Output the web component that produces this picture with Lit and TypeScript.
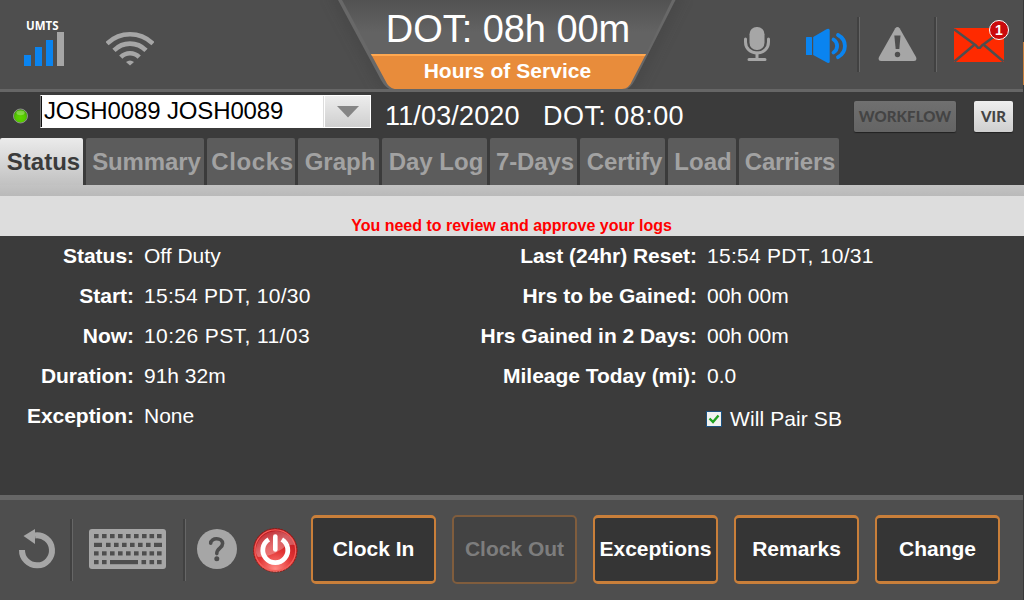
import { LitElement, html, css, svg } from "lit";
import { customElement } from "lit/decorators.js";

const TABS: [string, string][] = [
  ["Status", "t-status"],
  ["Summary", "t-summary"],
  ["Clocks", "t-clocks"],
  ["Graph", "t-graph"],
  ["Day Log", "t-daylog"],
  ["7-Days", "t-days"],
  ["Certify", "t-certify"],
  ["Load", "t-load"],
  ["Carriers", "t-carriers"],
];

const LEFT = [
  ["Status:", "Off Duty"],
  ["Start:", "15:54 PDT, 10/30", "wide"],
  ["Now:", "10:26 PST, 11/03", "wider"],
  ["Duration:", "91h 32m"],
  ["Exception:", "None"],
];

const RIGHT = [
  ["Last (24hr) Reset:", "15:54 PDT, 10/31", "wide"],
  ["Hrs to be Gained:", "00h 00m"],
  ["Hrs Gained in 2 Days:", "00h 00m"],
  ["Mileage Today (mi):", "0.0"],
];

const ACTIONS: [string, boolean][] = [
  ["Clock In", true],
  ["Clock Out", false],
  ["Exceptions", true],
  ["Remarks", true],
  ["Change", true],
];

const keyRow = (y: number, xs: number[]) =>
  xs.map((x) => svg`<rect x=${x} y=${y} width="4.6" height="4.2"/>`);

@customElement("app-root")
export class AppRoot extends LitElement {
  static styles = css`
    :host {
      display: grid;
      grid-template-columns: 1023px 1px;
      width: 1024px;
      height: 600px;
      overflow: hidden;
      background: #3b3b3b;
      color: #fff;
      font-family: "Liberation Sans", Arial, sans-serif;
      white-space: nowrap;
    }
    svg { display: block; flex: none; }
    .screen {
      display: grid;
      grid-template-rows: 92px 46px 47px 11px 40px 259px 105px;
      min-width: 0;
    }
    .edge { display: grid; grid-template-rows: 42px 43px 100px 11px 40px 1fr; background: #383838; }
    .edge-mark { grid-row: 2; background: #c97f3a; }
    .edge-band { grid-row: 4; }
    .edge-notice { grid-row: 5; background: #ddd; }

    .header {
      display: grid;
      grid-template-columns: 320px 373px 330px;
      background: #4e4e4e;
      border-bottom: 3px solid #666;
      box-sizing: border-box;
    }
    .signals { display: flex; padding-left: 23px; }
    .signal { width: 42px; padding-top: 19px; }
    .umts {
      font: 700 11.5px/13px "Open Sans", Lato, sans-serif;
      padding-left: 3px;
      height: 13px;
    }
    .wifi { padding: 31px 0 0 41px; }
    .title { position: relative; height: 92px; text-align: center; }
    .plate { position: absolute; left: 0; top: 0; }
    .clock { position: relative; font-size: 38px; line-height: 54px; height: 54px; padding: 2px 0 0 3px; box-sizing: border-box; letter-spacing: -0.05px; }
    .service { position: relative; font-size: 21px; font-weight: 700; line-height: 34px; letter-spacing: 0.05px; padding-left: 2px; }
    .tools { display: flex; align-items: flex-start; }
    .mic { margin: 26px 0 0 50px; }
    .speaker { margin: 28px 0 0 34px; }
    .rule { width: 1px; height: 55px; margin-top: 17px; border-left: 2px solid #414141; background: #666; flex: none; }
    .rule-a { margin-left: 9px; }
    .warn { margin: 26px 0 0 18px; }
    .rule-b { margin-left: 17px; }
    .mail { position: relative; margin: 28px 0 0 17px; width: 52px; height: 36px; }
    .badge {
      position: absolute; left: 35px; top: -8px; width: 18px; height: 18px;
      border: 1px solid #fff; border-radius: 50%; background: #cb0a0d;
      font: 700 14px/19px "Liberation Sans", sans-serif; text-align: center;
    }

    .subbar { display: flex; align-items: flex-start; }
    .dot { margin: 16px 0 0 12px; }
    .select { display: flex; width: 331px; height: 33px; margin: 3px 0 0 11px; background: #fff; box-sizing: border-box; border: 1px solid #fff; border-left: 1px solid #777; color: #000; }
    .user { width: 283px; font-size: 24px; line-height: 29px; padding-left: 2px; box-sizing: border-box; border-right: 1px solid #ddd; border-left: 1px solid #111; letter-spacing: -0.13px; }
    .drop { display: flex; flex: 1; margin-left: 1px; justify-content: center; align-items: center; background: linear-gradient(#ededed, #cfcfcf); }
    .date { font-size: 27px; line-height: 49px; margin-left: 14px; width: 159px; letter-spacing: 0.15px; }
    .dottime { font-size: 27px; line-height: 49px; width: 311px; letter-spacing: 0.45px; margin-left: -1px; }
    .btn {
      box-sizing: border-box; height: 31px; margin-top: 9px; border-radius: 2px; text-align: center;
      font: 900 15px/30px Lato, "Open Sans", sans-serif; color: #444; box-shadow: 0 1px 1px #222;
    }
    .workflow { width: 102px; background: linear-gradient(#707070, #646464); letter-spacing: 0.1px; }
    .vir { width: 39px; margin-left: 18px; background: linear-gradient(#eee, #cfcfcf); }

    .tabs { display: flex; gap: 3px; }
    .tab {
      flex: none; box-sizing: border-box; height: 47px; background: #5c5c5c; color: #a2a2a2;
      font-size: 24px; font-weight: 700; line-height: 48px; text-align: center; border-radius: 2px 2px 0 0;
      padding-left: 2px;
    }
    .t-status { width: 83px; background: linear-gradient(#ebebeb, #c1c1c1); color: #3b3b3b; padding-left: 4px; }
    .t-summary { width: 118px; letter-spacing: -0.1px; padding-left: 3px; }
    .t-clocks { width: 88px; letter-spacing: 0.6px; padding-left: 3px; }
    .t-graph { width: 81px; padding-left: 3px; }
    .t-daylog { width: 105px; padding-left: 3px; }
    .t-days { width: 87px; padding-left: 3px; letter-spacing: -0.1px; }
    .t-certify { width: 85px; padding-left: 4px; letter-spacing: -0.1px; }
    .t-load { width: 68px; }
    .t-carriers { width: 100px; letter-spacing: -0.2px; }
    .band { background: linear-gradient(#c3c3c3, #b9b9b9); }
    .notice { background: #ddd; color: #f00; font-size: 16px; font-weight: 700; text-align: center; line-height: 59px; overflow: hidden; }

    .content { display: grid; grid-template-columns: 460px 563px; font-size: 21px; align-items: start; }
    .facts { display: grid; grid-auto-rows: 40px; column-gap: 10px; line-height: 40px; }
    .facts-l { grid-template-columns: 134px 1fr; }
    .facts-r { grid-template-columns: 237px 1fr; }
    .label { font-weight: 700; text-align: right; letter-spacing: -0.03px; }
    .value { letter-spacing: 0; }
    .wide { letter-spacing: 0.28px; }
    .wider { letter-spacing: 0.4px; }
    .pair { grid-column: 2; display: flex; align-items: center; gap: 8px; padding: 6px 0 0; margin-left: -1px; letter-spacing: 0.1px; }

    .footer { display: flex; align-items: flex-start; background: #4e4e4e; border-top: 5px solid #666; box-sizing: border-box; }
    .undo { margin: 28px 0 0 18px; }
    .frule { width: 1px; height: 62px; margin-top: 19px; border-left: 2px solid #414141; background: #666; flex: none; }
    .fr-a { margin-left: 14px; }
    .keys { margin: 29px 0 0 16px; }
    .fr-b { margin-left: 17px; }
    .help { margin: 29px 0 0 11px; }
    .power { margin: 27px 0 0 15px; }
    .actions { display: flex; gap: 16px; margin: 15px 0 0 13px; }
    .action {
      box-sizing: border-box; width: 125px; height: 69px; border: solid #c97f3a; border-width: 3px 2px;
      border-radius: 5px; background: #353535; font-size: 21px; font-weight: 700; line-height: 61px;
      display: flex; justify-content: center;
    }
    .off { background: #434343; border-color: #805d3d; border-width: 2px; line-height: 63px; color: #7d7d7d; }
  `;

  private header() {
    return html`<div class="header">
      <div class="signals">
        <div class="signal">
          <div class="umts">UMTS</div>
          <svg width="42" height="34">
            <g fill="#0a84f0"><rect x="1" y="23" width="7" height="11"/><rect x="12" y="15" width="7" height="19"/><rect x="23" y="8" width="7" height="26"/></g>
            <rect x="34" y="0" width="7" height="34" fill="#a6a6a6"/>
          </svg>
        </div>
        <svg class="wifi" width="48" height="36" viewBox="0 0 48 36">
          <g fill="none" stroke="#a6a6a6" stroke-width="4.6">
            <path d="M1 12.6C14.2 .2 33.8 .2 47 12.6"/><path d="M8 19.4C17 10.4 31 10.4 40 19.4"/><path d="M14.8 26.2C20 21 28 21 33.2 26.2"/>
          </g>
          <path d="M24 34.6L20 31Q24 28 28 31Z" fill="#a6a6a6"/>
        </svg>
      </div>
      <div class="title">
        <svg class="plate" width="373" height="92">
          <defs>
            <linearGradient id="plate" x1="0" y1="0" x2="0" y2="1"><stop offset="0" stop-color="#525252"/><stop offset=".6" stop-color="#636363"/></linearGradient>
            <filter id="soft" x="-20%" y="-20%" width="140%" height="140%"><feGaussianBlur stdDeviation="7"/></filter>
          </defs>
          <path d="M8 -10L61 89H316L365 -10Z" fill="#383838" opacity=".3" filter="url(#soft)"/>
          <path d="M18 0L61 80Q66 89.5 74 90.5H303Q310 89.5 315 80L355.500 0Z" fill="#686868"/>
          <path d="M22 0L51 54H326L352 0Z" fill="url(#plate)"/>
          <path d="M51 54H326L312.500 80Q309 89 302 89H74.500Q68.500 88 65 80Z" fill="#e88c3b"/>
          <path d="M51 54H326L325 56H52Z" fill="#ffa850"/>
          <rect y="89" width="373" height="3" fill="#666"/>
        </svg>
        <div class="clock">DOT: 08h 00m</div>
        <div class="service">Hours of Service</div>
      </div>
      <div class="tools">
        <svg class="mic" width="28" height="36" viewBox="0 0 28 36">
          <rect x="6.500" y="1" width="15" height="23" rx="7.200" fill="#a6a6a6"/>
          <g fill="none" stroke="#a6a6a6" stroke-width="3" stroke-linecap="round"><path d="M2.500 13V16C2.500 22.500 7.500 27 14 27S25.500 22.500 25.500 16V13"/><path d="M14 27V33M6 33.500H22"/></g>
        </svg>
        <svg class="speaker" width="43" height="36" viewBox="0 0 43 36">
          <g fill="#0a84f0"><rect x="1" y="9" width="6" height="18" rx=".6"/><path d="M8.200 9L21 1.400Q24 0 24.700 2V34Q24 36 21 34L8.200 27Z"/></g>
          <g fill="none" stroke="#0a84f0" stroke-width="3.800" stroke-linecap="round"><path d="M28.500 11.500C33.300 14.500 33.300 21.500 28.500 24.500"/><path d="M33 7C42.200 12 42.200 24 33 29.200"/></g>
        </svg>
        <div class="rule rule-a"></div>
        <svg class="warn" width="39" height="36" viewBox="0 0 39 36">
          <path d="M17.300 2.300Q19.500-.5 21.600 2.300L38 31Q39.400 34.800 36 35H3Q-.4 34.800 1 31Z" fill="#a6a6a6"/>
          <path d="M16.300 9.500H22.500L21.300 23H17.700Z" fill="#4e4e4e"/><circle cx="19.500" cy="28.500" r="2.700" fill="#4e4e4e"/>
        </svg>
        <div class="rule rule-b"></div>
        <div class="mail">
          <svg width="52" height="36" viewBox="0 0 52 36">
            <rect x="0" y="0" width="50" height="34" fill="#ff2a00"/>
            <g fill="none" stroke="#4e4e4e" stroke-width="2.400"><path d="M0 1.200L22 17.500L24 19.700H26L28 17.500L50 1.200"/><path d="M0.500 33.500L20 17M49.500 33.500L30 17"/></g>
          </svg>
          <span class="badge">1</span>
        </div>
      </div>
    </div>`;
  }

  private subbar() {
    return html`<div class="subbar">
      <svg class="dot" width="17" height="17">
        <defs><radialGradient id="led" cx=".5" cy=".62" r=".6"><stop offset="0" stop-color="#5fd600"/><stop offset=".55" stop-color="#55c800"/><stop offset="1" stop-color="#3a9c00"/></radialGradient></defs>
        <circle cx="8.500" cy="8" r="7" fill="url(#led)" stroke="#909090" stroke-width="1"/>
        <ellipse cx="8.500" cy="4.800" rx="4.200" ry="2.400" fill="#b4e886" opacity=".5"/>
      </svg>
      <div class="select">
        <div class="user">JOSH0089 JOSH0089</div>
        <div class="drop"><svg width="22" height="12"><path d="M0 0H22L11 11.500Z" fill="#858585"/></svg></div>
      </div>
      <div class="date">11/03/2020</div>
      <div class="dottime">DOT: 08:00</div>
      <div class="btn workflow">WORKFLOW</div>
      <div class="btn vir">VIR</div>
    </div>`;
  }

  private footer() {
    return html`<div class="footer">
      <svg class="undo" width="38" height="42" viewBox="0 0 38 42">
        <path d="M4 22A15 15 0 1 0 17 7.500" fill="none" stroke="#a6a6a6" stroke-width="6"/><path d="M5.500 8L17 1V16Z" fill="#a6a6a6"/>
      </svg>
      <div class="frule fr-a"></div>
      <svg class="keys" width="77" height="40" viewBox="0 0 77 40">
        <rect width="77" height="40" rx="3" fill="#a6a6a6"/>
        <g fill="#4e4e4e">
          ${keyRow(5, [5, 13, 21, 29, 37, 45, 53, 60.5, 68])}
          <rect x="5" y="13.800" width="8" height="4.200"/>${keyRow(13.8, [17, 25, 33, 41, 49, 57])}<rect x="65" y="13.800" width="8" height="4.200"/>
          ${keyRow(22.3, [5, 13, 21, 29, 37, 45, 53, 60.5, 68])}
          ${keyRow(31, [5, 13])}<rect x="21" y="31" width="28" height="4.200"/>${keyRow(31, [52.5, 60.5, 68])}
        </g>
      </svg>
      <div class="frule fr-b"></div>
      <svg class="help" width="40" height="40" viewBox="0 0 40 40">
        <circle cx="20" cy="20" r="20" fill="#a6a6a6"/>
        <path d="M13.700 14.200C13.700 8.300 25.600 8.300 25.600 14.500C25.600 19.300 19.800 19.200 19.800 24.600" fill="none" stroke="#4e4e4e" stroke-width="3.600" stroke-linecap="round"/><circle cx="19.800" cy="29.800" r="2.500" fill="#4e4e4e"/>
      </svg>
      <svg class="power" width="46" height="46" viewBox="0 0 46 46">
        <defs>
          <radialGradient id="red" cx=".5" cy=".92" r=".9"><stop offset="0" stop-color="#ff8983"/><stop offset=".45" stop-color="#e33535"/><stop offset="1" stop-color="#b40f18"/></radialGradient>
          <linearGradient id="shine" x1="0" y1="0" x2="1" y2="1"><stop offset="0" stop-color="#fff" stop-opacity=".05"/><stop offset=".5" stop-color="#fff" stop-opacity=".3"/><stop offset="1" stop-color="#fff" stop-opacity=".2"/></linearGradient>
        </defs>
        <circle cx="23.300" cy="23.300" r="21.800" fill="url(#red)" stroke="#8d1a14" stroke-width="1" stroke-dasharray="2 1"/>
        <circle cx="23.300" cy="23.300" r="20.400" fill="none" stroke="#f4605a" stroke-width="1.200"/>
        <path d="M4 21A20 20 0 0 1 42.800 18Q36 17 30 22Q18 30 6 30Q3 26 4 21Z" fill="url(#shine)"/>
        <path d="M16.800 12.500A12.500 12.500 0 1 0 29.800 12.500" fill="none" stroke="#fff" stroke-width="4.800"/>
        <path d="M23.300 9.500V22.500" stroke="#fff" stroke-width="4.600" stroke-linecap="round"/>
      </svg>
      <div class="actions">
        ${ACTIONS.map(([t, on]) => html`<div class="action ${on ? "" : "off"}">${t}</div>`)}
      </div>
    </div>`;
  }

  render() {
    const fact = ([l, v, c]: string[]) => html`<div class="label">${l}</div><div class="value ${c ?? ""}">${v}</div>`;
    return html`<div class="screen">
        ${this.header()} ${this.subbar()}
        <div class="tabs">${TABS.map(([t, c]) => html`<div class="tab ${c}">${t}</div>`)}</div>
        <div class="band"></div>
        <div class="notice">You need to review and approve your logs</div>
        <div class="content">
          <div class="facts facts-l">${LEFT.map(fact)}</div>
          <div class="facts facts-r">
            ${RIGHT.map(fact)}
            <div class="pair">
              <svg width="16" height="16"><rect x=".5" y=".5" width="15" height="15" fill="#f2f2f0" stroke="#1c5180"/><path d="M3.500 7.500L7 11L12.500 4.500" fill="none" stroke="#21a121" stroke-width="2.400"/></svg>
              <span>Will Pair SB</span>
            </div>
          </div>
        </div>
        ${this.footer()}
      </div>
      <div class="edge"><div class="edge-mark"></div><div class="edge-band band"></div><div class="edge-notice"></div></div>`;
  }
}
